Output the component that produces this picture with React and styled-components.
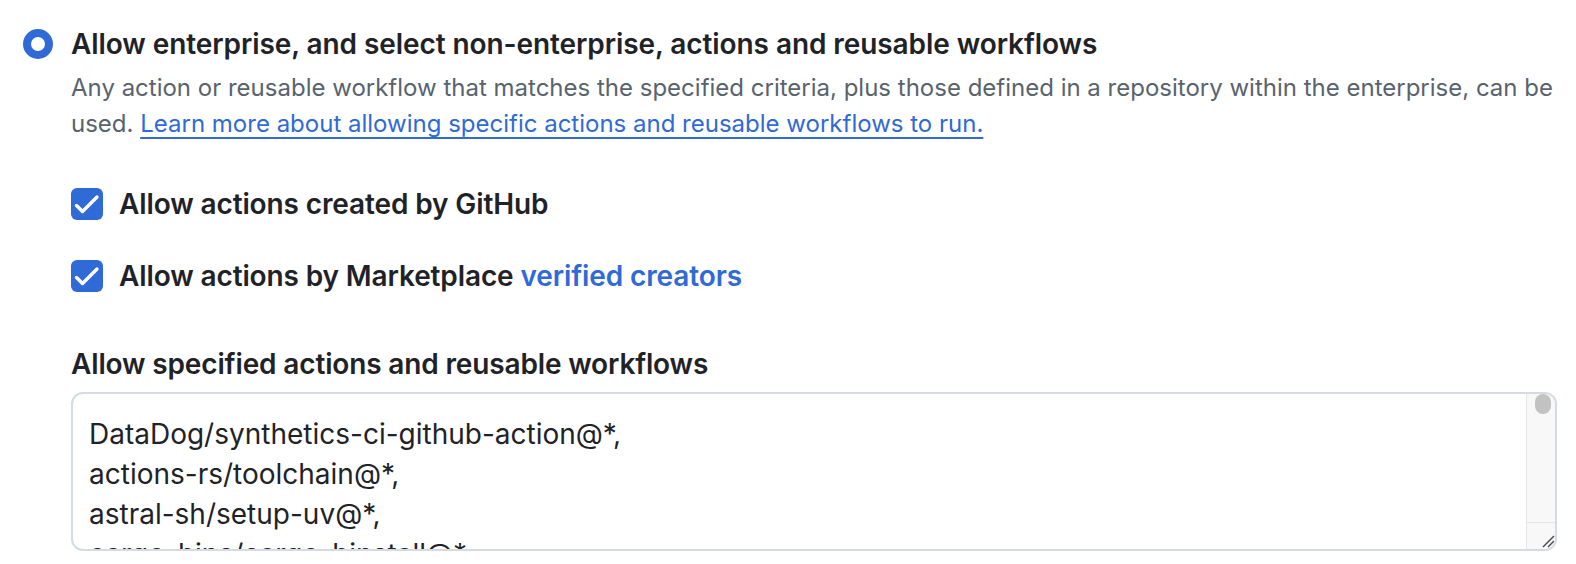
import React from "react";
import styled, { createGlobalStyle } from "styled-components";

const GlobalStyle = createGlobalStyle`
  html, body {
    margin: 0;
    padding: 0;
    background: #ffffff;
  }
  body {
    font-family: Inter, "Noto Sans", "Liberation Sans", sans-serif;
    color: #1f2328;
    -webkit-font-smoothing: antialiased;
  }
`;

const BLUE = "#2f6ad6";

const Page = styled.div`
  padding: 24px 19px 0 23px;
  width: 1576px;
  box-sizing: border-box;
  height: 564px;
  overflow: hidden;
`;

const OptionRow = styled.div`
  display: grid;
  grid-template-columns: 30px 1fr;
  column-gap: 18px;
  align-items: start;
`;

const RadioDot = styled.span`
  display: block;
  box-sizing: border-box;
  width: 30px;
  height: 30px;
  margin-top: 5px;
  border-radius: 50%;
  border: 8px solid ${BLUE};
  background: #ffffff;
`;

const OptionBody = styled.div`
  display: flex;
  flex-direction: column;
  min-width: 0;
`;

const OptionTitle = styled.div`
  font-size: 28px;
  line-height: 40px;
  font-weight: 600;
  letter-spacing: -0.08px;
  color: #1f2328;
`;

const Description = styled.p`
  margin: 6px 0 0;
  font-size: 24px;
  line-height: 36px;
  color: #59636e;
`;

const DescLine = styled.span`
  display: block;
  white-space: nowrap;
`;

const Link = styled.a`
  color: ${BLUE};
  text-decoration: ${(p) => (p.$underline ? "underline" : "none")};
  text-decoration-thickness: 2px;
  text-underline-offset: 5px;
`;

const CheckList = styled.div`
  display: flex;
  flex-direction: column;
  gap: 32px;
  margin-top: 42px;
`;

const CheckRow = styled.label`
  display: flex;
  align-items: center;
  gap: 16px;
  height: 40px;
`;

const CheckBox = styled.span`
  flex: none;
  width: 32px;
  height: 32px;
  border-radius: 6px;
  background: ${BLUE};
  display: flex;
  align-items: center;
  justify-content: center;
`;

const CheckLabel = styled.span`
  font-size: 28px;
  line-height: 40px;
  font-weight: 600;
  letter-spacing: -0.12px;
  color: #1f2328;
`;

const FieldLabel = styled.div`
  margin-top: 48px;
  font-size: 28px;
  line-height: 40px;
  font-weight: 600;
  letter-spacing: -0.15px;
  color: #1f2328;
`;

const TextBox = styled.div`
  margin-top: 8px;
  height: 159px;
  box-sizing: border-box;
  border: 2px solid #d5dbe2;
  border-radius: 12px;
  display: flex;
  overflow: hidden;
  background: #ffffff;
`;

const TextLines = styled.div`
  flex: 1;
  padding: 20px 16px 0;
  font-size: 28px;
  line-height: 40px;
  color: #1f2328;
  white-space: pre;
  overflow: hidden;
`;

const ScrollTrack = styled.div`
  flex: none;
  width: 28px;
  display: flex;
  flex-direction: column;
  background: #f8f8f8;
  border-left: 1px solid #e6e6e6;
`;

const ScrollThumb = styled.div`
  width: 16px;
  height: 20px;
  margin: 0 4px 0 8px;
  border-radius: 8px;
  background: #c2c2c2;
`;

const ScrollFill = styled.div`
  flex: 1;
`;

const Resizer = styled.div`
  height: 26px;
  border-top: 1px solid #e6e6e6;
  display: flex;
  align-items: flex-end;
  justify-content: flex-end;
`;

const lines = [
  "DataDog/synthetics-ci-github-action@*,",
  "actions-rs/toolchain@*,",
  "astral-sh/setup-uv@*,",
  "cargo-bins/cargo-binstall@*,",
];

function Check() {
  return (
    <CheckBox>
      <svg width="32" height="32" viewBox="0 0 32 32" fill="none">
        <path
          d="M5.5 17.5 L11.5 23.5 L26 9"
          stroke="#ffffff"
          strokeWidth="3.4"
          strokeLinecap="round"
          strokeLinejoin="round"
        />
      </svg>
    </CheckBox>
  );
}

export default function App() {
  return (
    <>
      <GlobalStyle />
      <Page>
        <OptionRow>
          <RadioDot />
          <OptionBody>
            <OptionTitle>
              Allow enterprise, and select non-enterprise, actions and reusable workflows
            </OptionTitle>
            <Description>
              <DescLine>
                Any action or reusable workflow that matches the specified criteria, plus those
                defined in a repository within the enterprise, can be
              </DescLine>
              <DescLine>
                used.{" "}
                <Link href="#" $underline>
                  Learn more about allowing specific actions and reusable workflows to run.
                </Link>
              </DescLine>
            </Description>
            <CheckList>
              <CheckRow>
                <Check />
                <CheckLabel>Allow actions created by GitHub</CheckLabel>
              </CheckRow>
              <CheckRow>
                <Check />
                <CheckLabel>
                  Allow actions by Marketplace <Link href="#">verified creators</Link>
                </CheckLabel>
              </CheckRow>
            </CheckList>
            <FieldLabel>Allow specified actions and reusable workflows</FieldLabel>
            <TextBox>
              <TextLines>{lines.join("\n")}</TextLines>
              <ScrollTrack>
                <ScrollThumb />
                <ScrollFill />
                <Resizer>
                  <svg width="26" height="26" viewBox="0 0 26 26" fill="none">
                    <path d="M14 24 L25 13" stroke="#4a4a4a" strokeWidth="1.4" />
                    <path d="M19 24 L25 18" stroke="#4a4a4a" strokeWidth="1.4" />
                  </svg>
                </Resizer>
              </ScrollTrack>
            </TextBox>
          </OptionBody>
        </OptionRow>
      </Page>
    </>
  );
}
